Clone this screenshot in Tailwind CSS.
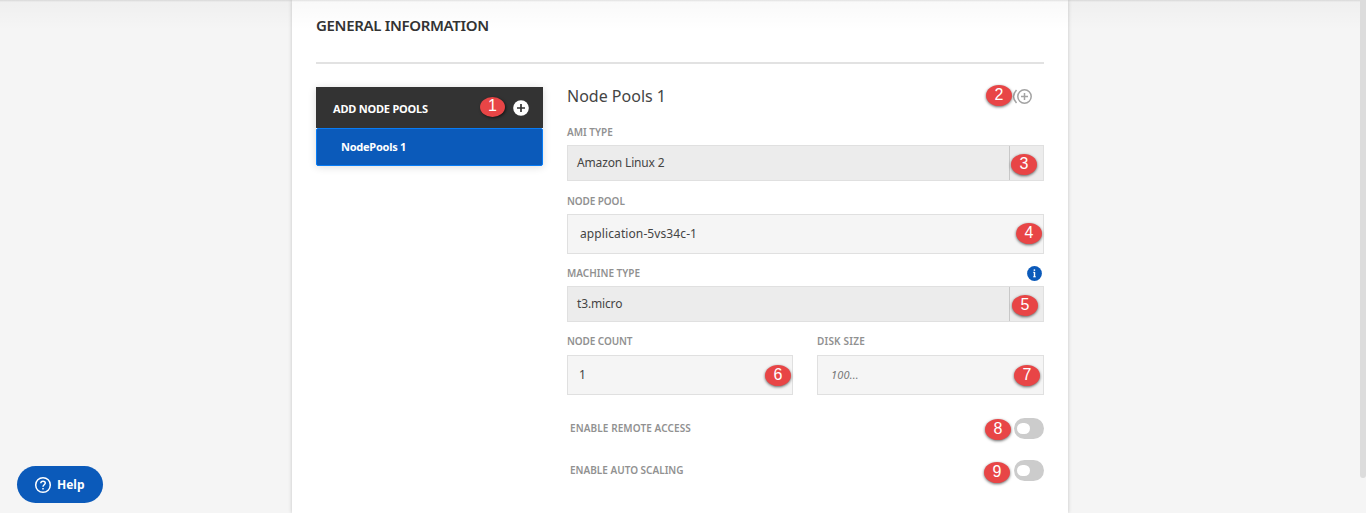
<!DOCTYPE html>
<html lang="en">
<head>
<meta charset="utf-8">
<title>General Information</title>
<script src="https://cdn.jsdelivr.net/npm/@tailwindcss/browser@4"></script>
</head>
<body class="relative h-[513px] overflow-hidden bg-[#f5f5f5] font-['Noto_Sans','Open_Sans',sans-serif] text-[#444]">
<main class="ml-[292px] h-[513px] w-[776px] bg-white px-6 shadow-[0_0_4px_rgba(0,0,0,0.2)]">
  <h1 class="h-[62px] pt-[15px] text-[15px] leading-5 font-semibold whitespace-nowrap text-[#333]"><span class="tracking-[-0.33px]">GENERAL INFORMATION</span></h1>
  <div class="h-0.5 bg-[#e2e2e2]"></div>
  <div class="flex gap-6 pt-[23px]">
    <aside class="h-[79px] w-[227px] shadow-[0_1px_8px_rgba(0,0,0,0.14)]">
      <div class="relative flex h-[41px] items-center justify-between bg-[#333] pr-[14px] pl-[17px] text-[11px] font-bold text-white">
        <span class="pt-[3px] tracking-[-0.2px] whitespace-nowrap">ADD NODE POOLS</span>
        <svg class="size-4" viewBox="0 0 16 16"><circle cx="8" cy="8" r="7.8" fill="#fff"/><path d="M8 4v8M4 8h8" stroke="#333" stroke-width="1.7"/></svg>
        <span class="absolute top-[10px] left-[164px] flex h-5 w-[25px] items-center justify-center rounded-[50%] bg-[#e84546] pb-0.5 font-['Liberation_Sans',sans-serif] text-base leading-none font-normal shadow-[1px_1px_3px_rgba(0,0,0,0.6)]">1</span>
      </div>
      <div class="flex h-[38px] items-center rounded-[2px] border border-[#087cf5] bg-[#0b5aba] pl-6 text-[11px] font-bold text-white"><span class="tracking-[-0.25px] whitespace-nowrap">NodePools 1</span></div>
    </aside>
    <section class="w-[477px] text-[12px]">
      <div class="relative flex h-5 items-center justify-between">
        <h2 class="pb-0.5 text-[16px] leading-5 whitespace-nowrap"><span>Node Pools 1</span></h2>
        <svg class="mr-3 h-4 w-5" viewBox="0 0 20 16" fill="none" stroke="#a3a3a3" stroke-width="1.5"><circle cx="12.5" cy="7.5" r="6.7"/><path d="M12.5 4v7M9 7.5h7M4.5 1Q-1.5 7.5 4.5 14"/></svg>
        <span class="absolute top-[-2px] left-[419px] flex h-[21px] w-[26px] items-center justify-center rounded-[50%] bg-[#e84546] pb-0.5 font-['Liberation_Sans',sans-serif] text-base leading-none text-white shadow-[0_1px_3px_rgba(0,0,0,0.6)]">2</span>
      </div>
      <div class="mt-[17px] mb-[5px] h-4 text-[10px] leading-4 font-semibold text-[#919191]"><span>AMI TYPE</span></div>
      <div class="relative flex h-9 items-center justify-between border border-[#e0e0e0] bg-[#ececec] pl-[9px]">
        <span class="tracking-[-0.15px]">Amazon Linux 2</span><span class="h-full w-[34px] border-l border-[#c8c8c8]"></span>
        <span class="absolute top-[8px] left-[443px] flex h-[21px] w-[26px] items-center justify-center rounded-[50%] bg-[#e84546] pb-0.5 font-['Liberation_Sans',sans-serif] text-base leading-none text-white shadow-[0_1px_3px_rgba(0,0,0,0.6)]">3</span>
      </div>
      <div class="mt-3 mb-[5px] h-4 text-[10px] leading-4 font-semibold text-[#919191]"><span class="tracking-[-0.1px]">NODE POOL</span></div>
      <div class="relative flex h-10 items-center border border-[#e0e0e0] bg-[#f5f5f5] pl-3">
        <span class="tracking-[0.1px]">application-5vs34c-1</span>
        <span class="absolute top-[8px] left-[448px] flex h-[21px] w-[26px] items-center justify-center rounded-[50%] bg-[#e84546] pb-0.5 font-['Liberation_Sans',sans-serif] text-base leading-none text-white shadow-[0_1px_3px_rgba(0,0,0,0.6)]">4</span>
      </div>
      <div class="mt-[11px] mb-[5px] flex h-4 items-center justify-between text-[10px] leading-4 font-semibold text-[#919191]"><span>MACHINE TYPE</span>
        <svg class="mr-[2px] size-[15px]" viewBox="0 0 15 15"><circle cx="7.5" cy="7.5" r="7.4" fill="#0b5aba"/><path d="M6.2 6.3h1.3v4.6M6.2 10.8h2.6" fill="none" stroke="#fff" stroke-width="1"/><path d="M7.5 6v5" stroke="#fff" stroke-width="1.4"/><circle cx="7.4" cy="4.1" r=".9" fill="#fff"/></svg>
      </div>
      <div class="relative flex h-9 items-center justify-between border border-[#e0e0e0] bg-[#ececec] pl-[9px]">
        <span class="tracking-[-0.15px]">t3.micro</span><span class="h-full w-[34px] border-l border-[#c8c8c8]"></span>
        <span class="absolute top-[8px] left-[444px] flex h-[21px] w-[26px] items-center justify-center rounded-[50%] bg-[#e84546] pb-0.5 font-['Liberation_Sans',sans-serif] text-base leading-none text-white shadow-[0_1px_3px_rgba(0,0,0,0.6)]">5</span>
      </div>
      <div class="mt-[11px] grid grid-cols-[226px_227px] gap-6">
        <div>
          <div class="mb-[6px] h-4 text-[10px] leading-4 font-semibold text-[#919191]"><span class="tracking-[-0.1px]">NODE COUNT</span></div>
          <div class="relative flex h-10 items-center border border-[#e0e0e0] bg-[#f5f5f5] pl-[11px]"><span>1</span>
            <span class="absolute top-[9px] left-[197px] flex h-[21px] w-[26px] items-center justify-center rounded-[50%] bg-[#e84546] pb-0.5 font-['Liberation_Sans',sans-serif] text-base leading-none text-white shadow-[0_1px_3px_rgba(0,0,0,0.6)]">6</span></div>
        </div>
        <div>
          <div class="mb-[6px] h-4 text-[10px] leading-4 font-semibold text-[#919191]"><span class="tracking-[0.2px]">DISK SIZE</span></div>
          <div class="relative flex h-10 items-center border border-[#e0e0e0] bg-[#f5f5f5] pl-[13px]"><span class="text-[11px] tracking-[0.2px] text-[#777] italic">100...</span>
            <span class="absolute top-[9px] left-[196px] flex h-[21px] w-[26px] items-center justify-center rounded-[50%] bg-[#e84546] pb-0.5 font-['Liberation_Sans',sans-serif] text-base leading-none text-white shadow-[0_1px_3px_rgba(0,0,0,0.6)]">7</span></div>
        </div>
      </div>
      <div class="relative mt-[23px] flex h-[21px] items-center justify-between pl-[3px] text-[10px] font-semibold text-[#919191]">
        <span class="tracking-[0.1px]">ENABLE REMOTE ACCESS</span>
        <span class="flex h-[21px] w-[30px] items-center rounded-full bg-[#ccc] pl-[3px]"><span class="h-[11px] w-[13px] rounded-full bg-white"></span></span>
        <span class="absolute top-[1px] left-[418px] flex h-[21px] w-[26px] items-center justify-center rounded-[50%] bg-[#e84546] pb-0.5 font-['Liberation_Sans',sans-serif] text-base leading-none font-normal text-white shadow-[0_1px_3px_rgba(0,0,0,0.6)]">8</span>
      </div>
      <div class="relative mt-[21px] flex h-[21px] items-center justify-between pl-[3px] text-[10px] font-semibold text-[#919191]">
        <span>ENABLE AUTO SCALING</span>
        <span class="flex h-[21px] w-[30px] items-center rounded-full bg-[#ccc] pl-[3px]"><span class="h-[11px] w-[13px] rounded-full bg-white"></span></span>
        <span class="absolute top-[2px] left-[417px] flex h-[21px] w-[26px] items-center justify-center rounded-[50%] bg-[#e84546] pb-0.5 font-['Liberation_Sans',sans-serif] text-base leading-none font-normal text-white shadow-[0_1px_3px_rgba(0,0,0,0.6)]">9</span>
      </div>
    </section>
  </div>
</main>
<div class="absolute inset-x-0 top-0 h-[30px] bg-linear-to-b from-black/[0.025] to-transparent"></div>
<div class="absolute inset-x-0 top-0 h-0.5 bg-linear-to-b from-black/10 to-transparent"></div>
<div class="absolute top-0 right-0 h-[478px] w-1.5 rounded-b-full bg-[#dcdcdc]"></div>
<button class="absolute top-[466px] left-[17px] flex h-[37px] w-[86px] items-center gap-[5px] rounded-full bg-[#0b5aba] pl-[17px] text-[12px] font-bold text-white">
  <svg class="size-[18px]" viewBox="0 0 18 18" fill="none" stroke="#fff" stroke-width="1.5"><circle cx="9" cy="9" r="7.3"/><path d="M6.8 7.3C6.8 4.4 11.3 4.5 11.3 7.1C11.3 8.7 9 8.8 9 10.7"/><path d="M9 12v1.5"/></svg>
  <span>Help</span>
</button>
</body>
</html>
